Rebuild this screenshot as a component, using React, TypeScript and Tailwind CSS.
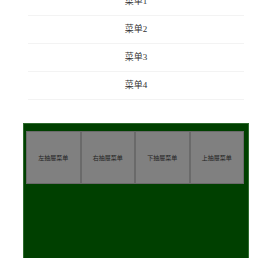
const menus = ["菜单1", "菜单2", "菜单3", "菜单4"];
const drawers = ["左抽屉菜单", "右抽屉菜单", "下抽屉菜单", "上抽屉菜单"];

const App = () => {
  return (
    <div
      className="h-[258px] overflow-hidden bg-white"
      style={{ fontFamily: '"Liberation Serif", "Noto Sans CJK SC", serif' }}
    >
      <ul className="ml-[28px] mt-[-12px] w-[216px]">
        {menus.map((m) => (
          <li
            key={m}
            className="flex h-[28px] items-center justify-center border-b border-[#f3f3f3] text-[9px] text-[#333]"
          >
            {m}
          </li>
        ))}
      </ul>
      <div className="ml-[23px] mt-[23px] h-[160px] w-[226px] border border-[#2e6b2e] bg-[#004000] pl-[2px] pt-[7px]">
        <div className="flex w-[218px]">
          {drawers.map((d) => (
            <button
              key={d}
              className="flex h-[53px] flex-1 items-center justify-center border border-[#6a6a6a] bg-[#808080] text-[6px] text-[#222]"
              style={{ fontFamily: '"Noto Sans CJK SC", sans-serif' }}
            >
              {d}
            </button>
          ))}
        </div>
      </div>
    </div>
  );
};

export default App;
